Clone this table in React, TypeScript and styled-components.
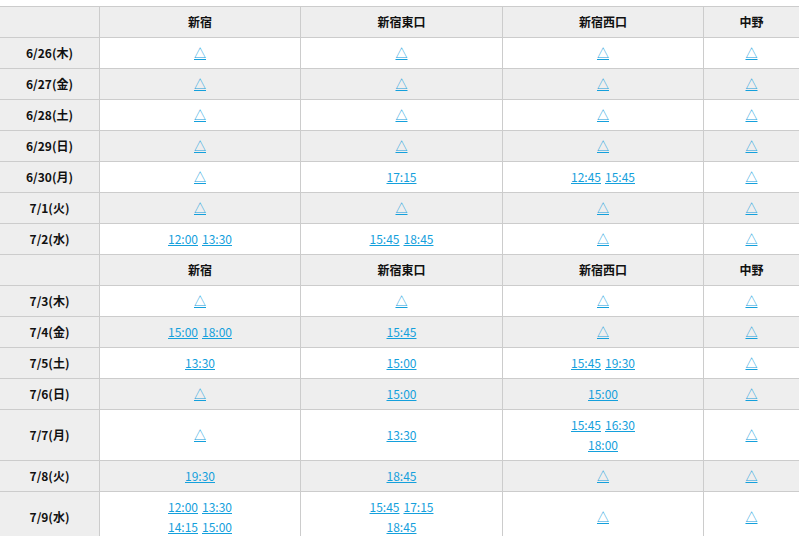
import React from "react";
import styled, { createGlobalStyle } from "styled-components";

const Global = createGlobalStyle`
  html, body { margin: 0; padding: 0; background: #fff; }
  body { font-family: "Noto Sans CJK JP", "Noto Sans", sans-serif; color: #222; }
`;

const Wrap = styled.div`
  padding-top: 6px;
  width: 799px;
  overflow: hidden;
`;

const Table = styled.table`
  border-collapse: collapse;
  table-layout: fixed;
  width: 800px;
  margin-left: -1px;
  font-size: 12px;
`;

const Row = styled.tr<{ $shade?: boolean }>`
  background: ${(p) => (p.$shade ? "#eeeeee" : "#ffffff")};
`;

const HeadCell = styled.th`
  background: #eeeeee;
  border: 1px solid #cccccc;
  padding: 5px 4px;
  line-height: 20px;
  font-weight: 700;
  text-align: center;
  color: #111;
`;

const DateCell = styled.th`
  background: #eeeeee;
  border: 1px solid #cccccc;
  padding: 5px 4px;
  line-height: 20px;
  font-weight: 700;
  text-align: center;
  color: #111;
`;

const Cell = styled.td`
  border: 1px solid #cccccc;
  padding: 5px 4px;
  line-height: 20px;
  text-align: center;
`;

const Link = styled.a`
  color: #14a0dc;
  text-decoration: underline;
  margin: 0 2px;
`;

const stations = ["新宿", "新宿東口", "新宿西口", "中野"];

type Day = { date: string; cells: (string[] | null)[] };

const week1: Day[] = [
  { date: "6/26(木)", cells: [null, null, null, null] },
  { date: "6/27(金)", cells: [null, null, null, null] },
  { date: "6/28(土)", cells: [null, null, null, null] },
  { date: "6/29(日)", cells: [null, null, null, null] },
  { date: "6/30(月)", cells: [null, ["17:15"], ["12:45", "15:45"], null] },
  { date: "7/1(火)", cells: [null, null, null, null] },
  { date: "7/2(水)", cells: [["12:00", "13:30"], ["15:45", "18:45"], null, null] },
];

const week2: Day[] = [
  { date: "7/3(木)", cells: [null, null, null, null] },
  { date: "7/4(金)", cells: [["15:00", "18:00"], ["15:45"], null, null] },
  { date: "7/5(土)", cells: [["13:30"], ["15:00"], ["15:45", "19:30"], null] },
  { date: "7/6(日)", cells: [null, ["15:00"], ["15:00"], null] },
  { date: "7/7(月)", cells: [null, ["13:30"], ["15:45", "16:30", "18:00"], null] },
  { date: "7/8(火)", cells: [["19:30"], ["18:45"], null, null] },
  { date: "7/9(水)", cells: [["12:00", "13:30", "14:15", "15:00"], ["15:45", "17:15", "18:45"], null, null] },
];

function Times({ times }: { times: string[] | null }) {
  if (!times) return <Link href="#">△</Link>;
  const lines: string[][] = [];
  for (let i = 0; i < times.length; i += 2) lines.push(times.slice(i, i + 2));
  return (
    <>
      {lines.map((l, i) => (
        <div key={i}>
          {l.map((t) => (
            <Link key={t} href="#">
              {t}
            </Link>
          ))}
        </div>
      ))}
    </>
  );
}

function Header() {
  return (
    <Row $shade>
      <HeadCell />
      {stations.map((s) => (
        <HeadCell key={s}>{s}</HeadCell>
      ))}
    </Row>
  );
}

function Week({ days }: { days: Day[] }) {
  return (
    <>
      <Header />
      {days.map((d, i) => (
        <Row key={d.date} $shade={i % 2 === 1}>
          <DateCell>{d.date}</DateCell>
          {d.cells.map((c, j) => (
            <Cell key={j}>
              <Times times={c} />
            </Cell>
          ))}
        </Row>
      ))}
    </>
  );
}

export default function App() {
  return (
    <>
      <Global />
      <Wrap>
        <Table>
          <colgroup>
            <col style={{ width: 100 }} />
            <col style={{ width: 201 }} />
            <col style={{ width: 202 }} />
            <col style={{ width: 201 }} />
            <col style={{ width: 96 }} />
          </colgroup>
          <tbody>
            <Week days={week1} />
            <Week days={week2} />
          </tbody>
        </Table>
      </Wrap>
    </>
  );
}
